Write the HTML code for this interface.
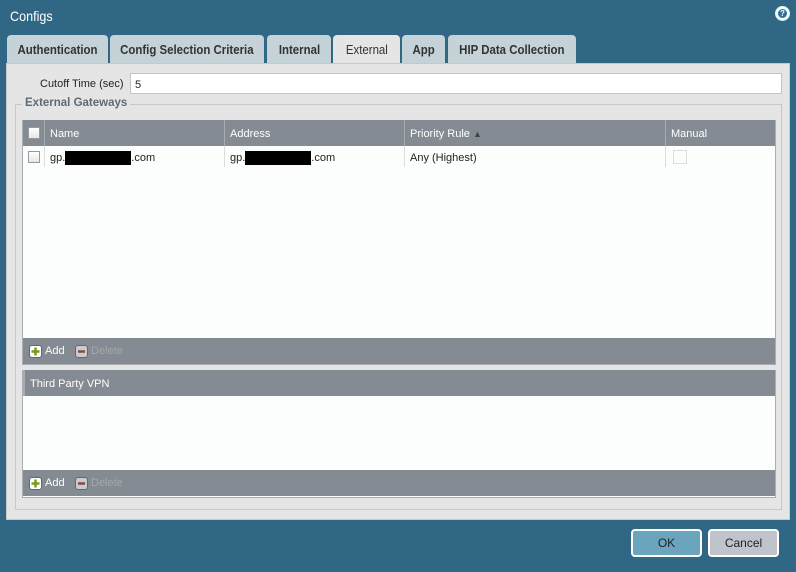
<!DOCTYPE html>
<html><head><style>
*{box-sizing:border-box;margin:0;padding:0}
body{width:796px;height:572px;background:#306785;font-family:"Liberation Sans",sans-serif;font-size:11px;position:relative;overflow:hidden;color:#222}
.a{position:absolute}
.title{left:10px;top:8px;color:#fff;font-size:14px;transform:scaleX(.9);transform-origin:left}
.help{left:775px;top:6px;width:15px;height:15px;border-radius:50%;background:#fff;border:1px solid #cfe;}
.help b{position:absolute;left:2px;top:2px;width:9px;height:9px;border-radius:50%;background:#2f6f99;color:#fff;font-size:8px;line-height:9px;text-align:center}
.tab{top:35px;height:28px;background:#c5d3d9;border-radius:4px 4px 0 0;font-weight:bold;font-size:13px;color:#333;text-align:center;line-height:30px;transform-origin:left}
.tab span{display:inline-block;transform:scaleX(.88)}
.panel{left:6px;top:63px;width:784px;height:457px;background:#e5e5e5;border:1px solid #c8c8c8}
.input{left:130px;top:73px;width:652px;height:21px;background:#fff;border:1px solid #c4c4c4;padding:5px 4px;font-size:11px}
.fs{left:15px;top:104px;width:767px;height:406px;border:1px solid #c8c8c8}
.legend{left:22px;top:97px;background:#e5e5e5;padding:0 3px;font-weight:bold;color:#5d6b77;font-size:11.5px}
.grid{background:#fcfdfd;border:1px solid #a9aeb3}
.hdr{background:#858b92;color:#fff;height:26px}
.tb{background:#858b92;height:26px}
.cb{width:12px;height:12px;border:1px solid #999;background:linear-gradient(#fff,#e6e6e6)}
.cell{top:0;height:26px;line-height:28px;padding-left:5px;border-left:1px solid #a7adb3}
.red{display:inline-block;background:#000;width:66px;height:14px;vertical-align:middle}
.btn{top:529px;width:71px;height:28px;border:2px solid #fff;border-radius:4px;text-align:center;line-height:24px;font-size:12px}
.plus{width:13px;height:13px;border-radius:3px;background:#fff;border:1px solid #5a6a77;position:absolute}
</style></head><body>
<div class="a title">Configs</div>
<div class="a help"><b>?</b></div>
<div class="a tab" style="left:7px;width:101px"><span>Authentication</span></div>
<div class="a tab" style="left:110px;width:154px"><span>Config Selection Criteria</span></div>
<div class="a tab" style="left:267px;width:64px"><span>Internal</span></div>
<div class="a tab" style="left:333px;width:67px;background:#e5e5e5;height:30px;font-weight:normal"><span>External</span></div>
<div class="a tab" style="left:402px;width:43px"><span>App</span></div>
<div class="a tab" style="left:448px;width:128px"><span>HIP Data Collection</span></div>
<div class="a panel"></div>
<div class="a" style="left:40px;top:78px">Cutoff Time (sec)</div>
<div class="a input">5</div>
<div class="a fs"></div>
<div class="a legend">External Gateways</div>

<div class="a grid" style="left:22px;top:120px;width:754px;height:245px"></div>
<div class="a hdr" style="left:23px;top:120px;width:752px">
 <div class="a cb" style="left:5px;top:7px"></div>
 <div class="a cell" style="left:21px;width:180px">Name</div>
 <div class="a cell" style="left:201px;width:180px">Address</div>
 <div class="a cell" style="left:381px;width:261px">Priority Rule <span style="font-size:9px;color:#444">▲</span></div>
 <div class="a cell" style="left:642px;width:110px">Manual</div>
</div>
<div class="a" style="left:23px;top:146px;width:750px;height:21px">
 <div class="a cb" style="left:5px;top:5px"></div>
 <div class="a" style="left:21px;top:0;height:21px;border-left:1px solid #ddd;padding:5px 5px">gp.<span class="red"></span>.com</div>
 <div class="a" style="left:201px;top:0;height:21px;border-left:1px solid #ddd;padding:5px 5px">gp.<span class="red"></span>.com</div>
 <div class="a" style="left:381px;top:0;height:21px;border-left:1px solid #ddd;padding:6px 5px">Any (Highest)</div>
 <div class="a" style="left:642px;top:0;height:21px;border-left:1px solid #ddd"></div>
 <div class="a" style="left:650px;top:4px;width:14px;height:14px;border:1px solid #ddd"></div>
</div>
<div class="a tb" style="left:23px;top:338px;width:752px">
 <div class="plus" style="left:6px;top:7px"><svg width="11" height="11" class="a" style="left:0;top:0"><path d="M5.5 1.5v8M1.5 5.5h8" stroke="#7a9a1a" stroke-width="2.5"/></svg></div>
 <div class="a" style="left:22px;top:7px;color:#fff">Add</div>
 <div class="plus" style="left:52px;top:7px;background:#c8ccd0"><svg width="11" height="11" class="a" style="left:0;top:0"><path d="M2 5.5h7" stroke="#8a4a3a" stroke-width="2.5"/></svg></div>
 <div class="a" style="left:68px;top:7px;color:#a4a9ae">Delete</div>
</div>

<div class="a grid" style="left:22px;top:370px;width:754px;height:128px"></div>
<div class="a hdr" style="left:23px;top:370px;width:752px;border-left:2px solid #aab;padding:8px 5px;color:#fff">Third Party VPN</div>
<div class="a tb" style="left:23px;top:470px;width:752px">
 <div class="plus" style="left:6px;top:7px"><svg width="11" height="11" class="a" style="left:0;top:0"><path d="M5.5 1.5v8M1.5 5.5h8" stroke="#7a9a1a" stroke-width="2.5"/></svg></div>
 <div class="a" style="left:22px;top:7px;color:#fff">Add</div>
 <div class="plus" style="left:52px;top:7px;background:#c8ccd0"><svg width="11" height="11" class="a" style="left:0;top:0"><path d="M2 5.5h7" stroke="#8a4a3a" stroke-width="2.5"/></svg></div>
 <div class="a" style="left:68px;top:7px;color:#a4a9ae">Delete</div>
</div>

<div class="a btn" style="left:631px;background:#6aa5bd">OK</div>
<div class="a btn" style="left:708px;background:#bfc3cb">Cancel</div>
</body></html>
